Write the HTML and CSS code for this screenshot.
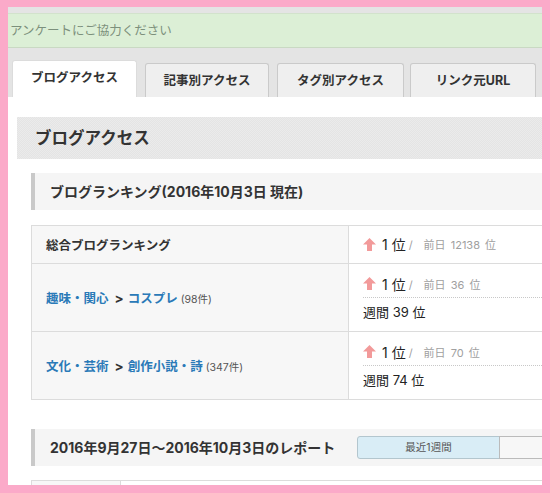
FILE: index.html
```html
<!DOCTYPE html>
<html lang="ja">
<head>
<meta charset="utf-8">
<title>ブログアクセス</title>
<link rel="stylesheet" href="styles.css">
</head>
<body>
<div class="frame">
  <div class="page">
    <div class="notice">アンケートにご協力ください</div>
    <ul class="tabs">
      <li class="tab active">ブログアクセス</li>
      <li class="tab t2">記事別アクセス</li>
      <li class="tab t3">タグ別アクセス</li>
      <li class="tab t4">リンク元URL</li>
    </ul>
    <div class="panel">
      <h2 class="title">ブログアクセス</h2>
      <h3 class="sub">ブログランキング(2016年10月3日 現在)</h3>
      <table class="rank">
        <tr class="r1">
          <th>総合ブログランキング</th>
          <td>
            <div class="line"><svg class="up" viewBox="0 0 13 13"><polygon points="6.5,0 13,6.5 9,6.5 9,13 4,13 4,6.5 0,6.5"/></svg><span class="pos">1 位</span><span class="prev"><span class="sl">/</span>前日 12138 位</span></div>
          </td>
        </tr>
        <tr class="r2">
          <th><a class="lnk">趣味・関心</a><span class="gt">&gt;</span><a class="lnk">コスプレ</a> <span class="cnt">(98件)</span></th>
          <td>
            <div class="line"><svg class="up" viewBox="0 0 13 13"><polygon points="6.5,0 13,6.5 9,6.5 9,13 4,13 4,6.5 0,6.5"/></svg><span class="pos">1 位</span><span class="prev"><span class="sl">/</span>前日 36 位</span></div>
            <div class="week">週間 39 位</div>
          </td>
        </tr>
        <tr class="r2">
          <th><a class="lnk">文化・芸術</a><span class="gt">&gt;</span><a class="lnk">創作小説・詩</a> <span class="cnt">(347件)</span></th>
          <td>
            <div class="line"><svg class="up" viewBox="0 0 13 13"><polygon points="6.5,0 13,6.5 9,6.5 9,13 4,13 4,6.5 0,6.5"/></svg><span class="pos">1 位</span><span class="prev"><span class="sl">/</span>前日 70 位</span></div>
            <div class="week">週間 74 位</div>
          </td>
        </tr>
      </table>
      <div class="sub report">
        <span class="rtitle">2016年9月27日～2016年10月3日のレポート</span>
        <div class="btns"><span class="btn on">最近1週間</span><span class="btn"></span></div>
      </div>
      <table class="rtable">
        <tr><td class="c1"></td><td class="c2"></td></tr>
      </table>
    </div>
  </div>
</div>
</body>
</html>
```

FILE: styles.css
```css
* { box-sizing: border-box; }
html, body { margin: 0; padding: 0; }
body {
  background: #fbaac9;
  font-family: "Inter", "Noto Sans CJK JP", sans-serif;
  color: #333;
}
.frame {
  width: 550px;
  height: 493px;
  padding: 7px 8px 8px 8px;
}
.page {
  height: 100%;
  overflow: hidden;
  background: #e4e4e4;
  padding-top: 6px;
  display: flex;
  flex-direction: column;
}
.notice {
  height: 35px;
  background: #dcefd6;
  border-top: 1px solid #d2e2cc;
  border-bottom: 1px solid #c9d9c3;
  color: #7c907c;
  font-size: 12.5px;
  line-height: 33px;
  padding-left: 2px;
  white-space: nowrap;
}
.tabs {
  list-style: none;
  margin: 0;
  padding: 12px 0 0 4px;
  display: flex;
  align-items: flex-end;
  gap: 8px;
}
.tab {
  height: 34px;
  background: #efefef;
  border: 1px solid #cacaca;
  border-bottom: none;
  border-radius: 3px 3px 0 0;
  font-size: 12.5px;
  font-weight: bold;
  color: #333;
  text-align: center;
  line-height: 33px;
  width: 124px;
}
.tab.active {
  height: 37px;
  width: 125px;
  background: #fff;
  border-color: #dcdcdc;
  line-height: 34px;
}
.t3 { width: 127px; }
.t4 { width: 126px; margin-left: -2px; }
.panel {
  flex: 1;
  background: #fff;
  overflow: hidden;
  padding: 20px 0 0 9px;
}
.title {
  margin: 0;
  width: 560px;
  height: 42px;
  background-color: #e8e8e8;
  background-image: repeating-conic-gradient(#e4e4e4 0 25%, #ebebeb 0 50%);
  background-size: 2px 2px;
  font-size: 16.5px;
  font-weight: bold;
  color: #333;
  line-height: 42px;
  padding-left: 18px;
}
.sub {
  margin: 14px 0 0 14px;
  width: 560px;
  height: 37px;
  background: #f5f5f5;
  border-left: 4px solid #c9c9c9;
  font-size: 14px;
  font-weight: bold;
  color: #333;
  line-height: 37px;
  padding-left: 15px;
  white-space: nowrap;
}
.rank {
  margin: 15px 0 0 14px;
  border-collapse: collapse;
  width: 560px;
}
.rank th, .rank td {
  border: 1px solid #dcdcdc;
  padding: 0;
}
.rank th {
  width: 317px;
  background: #f7f7f7;
  text-align: left;
  padding-left: 14px;
  font-size: 12.5px;
  font-weight: bold;
  color: #333;
  white-space: nowrap;
}
.rank td {
  padding-left: 14px;
  vertical-align: top;
}
.r1 { height: 38px; }
.r2 { height: 68px; }
.line {
  display: flex;
  align-items: center;
  height: 36px;
  white-space: nowrap;
}
.r2 .line {
  height: 34px;
  padding-top: 6px;
  border-bottom: 1px dotted #c8c8c8;
}
.up {
  width: 13px;
  height: 13px;
  fill: #f29a9a;
  margin-right: 6px;
}
.pos {
  font-size: 14px;
  color: #222;
}
.prev {
  font-size: 11px;
  color: #a0a0a0;
  word-spacing: 2px;
}
.sl {
  margin: 0 11px 0 3px;
}
.week {
  font-size: 13px;
  color: #222;
  line-height: 28px;
}
.lnk {
  color: #2a7ab8;
  text-decoration: none;
}
.gt {
  color: #333;
  font-size: 13.5px;
  margin: 0 4px 0 6px;
}
.cnt {
  font-size: 10.5px;
  font-weight: normal;
  color: #555;
}
.report {
  margin-top: 29px;
  display: flex;
  align-items: center;
}
.rtitle { width: 308px; flex-shrink: 0; }
.btns {
  display: flex;
  height: 23px;
  flex-shrink: 0;
}
.btn {
  display: block;
  width: 143px;
  height: 23px;
  border: 1px solid #bbb;
  background: #f7f7f7;
  font-size: 10.5px;
  font-weight: normal;
  color: #555;
  text-align: center;
  line-height: 21px;
  margin-left: -1px;
}
.btn.on {
  background: #d9edf6;
  border-color: #b3c6ce;
  border-radius: 3px 0 0 3px;
}
.rtable {
  margin: 14px 0 0 14px;
  border-collapse: collapse;
  width: 560px;
}
.rtable td {
  border: 1px solid #dcdcdc;
  height: 30px;
}
.rtable .c1 { width: 89px; background: #f7f7f7; }
```
